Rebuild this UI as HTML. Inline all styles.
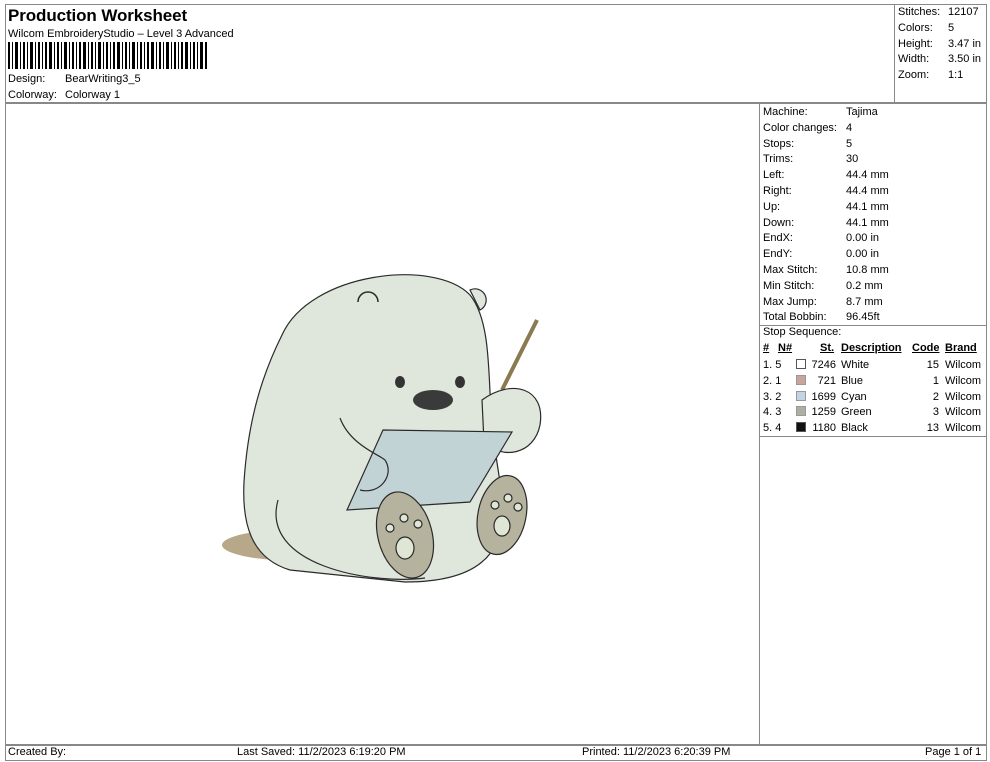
<!DOCTYPE html>
<html><head><meta charset="utf-8"><style>
*{margin:0;padding:0;box-sizing:border-box}
body{width:990px;height:762px;background:#fff;font-family:"Liberation Sans",Arial,sans-serif;font-size:11px;color:#000;position:relative;overflow:hidden}
.a{position:absolute;white-space:nowrap}
.b{position:absolute;border:1px solid #888}
</style></head><body>
<div class="b" style="left:5px;top:4px;width:982px;height:757px"></div>
<div class="b" style="left:5px;top:4px;width:982px;height:100px;border-width:1px 1px 2px 1px"></div>
<div class="b" style="left:894px;top:4px;width:93px;height:100px"></div>
<div class="b" style="left:759px;top:103px;width:228px;height:642px"></div>
<div class="b" style="left:759px;top:325px;width:228px;height:112px"></div>
<div class="b" style="left:5px;top:744px;width:982px;height:17px;border-width:2px 1px 1px 1px"></div>

<div class="a" style="left:8px;top:6px;font-size:17px;font-weight:bold;letter-spacing:-0.1px">Production Worksheet</div>
<div class="a" style="left:8px;top:28px">Wilcom EmbroideryStudio – Level 3 Advanced</div>
<svg class="a" style="left:8px;top:42px" width="200" height="27">
<g fill="#000">
<rect x="0" width="2" height="27"/><rect x="4" width="1" height="27"/><rect x="7" width="3" height="27"/><rect x="12" width="1" height="27"/><rect x="15" width="2" height="27"/><rect x="19" width="1" height="27"/><rect x="22" width="3" height="27"/><rect x="27" width="1" height="27"/><rect x="30" width="2" height="27"/><rect x="34" width="1" height="27"/><rect x="37" width="2" height="27"/><rect x="41" width="3" height="27"/><rect x="46" width="1" height="27"/><rect x="49" width="2" height="27"/><rect x="53" width="1" height="27"/><rect x="56" width="3" height="27"/><rect x="61" width="1" height="27"/><rect x="64" width="2" height="27"/><rect x="68" width="1" height="27"/><rect x="71" width="2" height="27"/><rect x="75" width="3" height="27"/><rect x="80" width="1" height="27"/><rect x="83" width="2" height="27"/><rect x="87" width="1" height="27"/><rect x="90" width="3" height="27"/><rect x="95" width="1" height="27"/><rect x="98" width="2" height="27"/><rect x="102" width="1" height="27"/><rect x="105" width="2" height="27"/><rect x="109" width="3" height="27"/><rect x="114" width="1" height="27"/><rect x="117" width="2" height="27"/><rect x="121" width="1" height="27"/><rect x="124" width="3" height="27"/><rect x="129" width="1" height="27"/><rect x="132" width="2" height="27"/><rect x="136" width="1" height="27"/><rect x="139" width="2" height="27"/><rect x="143" width="3" height="27"/><rect x="148" width="1" height="27"/><rect x="151" width="2" height="27"/><rect x="155" width="1" height="27"/><rect x="158" width="3" height="27"/><rect x="163" width="1" height="27"/><rect x="166" width="2" height="27"/><rect x="170" width="1" height="27"/><rect x="173" width="2" height="27"/><rect x="177" width="3" height="27"/><rect x="182" width="1" height="27"/><rect x="185" width="2" height="27"/><rect x="189" width="1" height="27"/><rect x="192" width="3" height="27"/><rect x="197" width="2" height="27"/>
</g></svg>
<div class="a" style="left:8px;top:73px">Design:</div><div class="a" style="left:65px;top:73px">BearWriting3_5</div>
<div class="a" style="left:8px;top:89px">Colorway:</div><div class="a" style="left:65px;top:89px">Colorway 1</div>

<div class="a" style="left:898px;top:5px;line-height:15.8px">Stitches:<br>Colors:<br>Height:<br>Width:<br>Zoom:</div>
<div class="a" style="left:948px;top:5px;line-height:15.8px">12107<br>5<br>3.47 in<br>3.50 in<br>1:1</div>

<div class="a" style="left:763px;top:105px;line-height:15.8px">Machine:<br>Color changes:<br>Stops:<br>Trims:<br>Left:<br>Right:<br>Up:<br>Down:<br>EndX:<br>EndY:<br>Max Stitch:<br>Min Stitch:<br>Max Jump:<br>Total Bobbin:</div>
<div class="a" style="left:846px;top:105px;line-height:15.8px">Tajima<br>4<br>5<br>30<br>44.4 mm<br>44.4 mm<br>44.1 mm<br>44.1 mm<br>0.00 in<br>0.00 in<br>10.8 mm<br>0.2 mm<br>8.7 mm<br>96.45ft</div>

<div class="a" style="left:763px;top:326px">Stop Sequence:</div>
<div class="a" style="left:763px;top:342px;font-weight:bold;text-decoration:underline">#</div>
<div class="a" style="left:778px;top:342px;font-weight:bold;text-decoration:underline">N#</div>
<div class="a" style="left:820px;top:342px;font-weight:bold;text-decoration:underline">St.</div>
<div class="a" style="left:841px;top:342px;font-weight:bold;text-decoration:underline">Description</div>
<div class="a" style="left:912px;top:342px;font-weight:bold;text-decoration:underline">Code</div>
<div class="a" style="left:945px;top:342px;font-weight:bold;text-decoration:underline">Brand</div>
<div class="a" style="left:763px;top:358px;line-height:15.8px">1. 5<br>2. 1<br>3. 2<br>4. 3<br>5. 4</div>
<div class="a" style="left:796px;top:359px;width:10px;height:10px;border:1px solid #555;background:#fff"></div>
<div class="a" style="left:796px;top:375px;width:10px;height:10px;border:1px solid #999;background:#c9a49c"></div>
<div class="a" style="left:796px;top:391px;width:10px;height:10px;border:1px solid #999;background:#c4d4e4"></div>
<div class="a" style="left:796px;top:406px;width:10px;height:10px;border:1px solid #999;background:#b0ada2"></div>
<div class="a" style="left:796px;top:422px;width:10px;height:10px;border:1px solid #555;background:#111"></div>
<div class="a" style="left:806px;top:358px;width:30px;text-align:right;line-height:15.8px">7246<br>721<br>1699<br>1259<br>1180</div>
<div class="a" style="left:841px;top:358px;line-height:15.8px">White<br>Blue<br>Cyan<br>Green<br>Black</div>
<div class="a" style="left:910px;top:358px;width:29px;text-align:right;line-height:15.8px">15<br>1<br>2<br>3<br>13</div>
<div class="a" style="left:945px;top:358px;line-height:15.8px">Wilcom<br>Wilcom<br>Wilcom<br>Wilcom<br>Wilcom</div>

<div class="a" style="left:8px;top:746px">Created By:</div>
<div class="a" style="left:237px;top:746px">Last Saved: 11/2/2023 6:19:20 PM</div>
<div class="a" style="left:582px;top:746px">Printed: 11/2/2023 6:20:39 PM</div>
<div class="a" style="left:925px;top:746px">Page 1 of 1</div>

<svg class="a" style="left:220px;top:260px" width="330" height="330" viewBox="0 0 330 330">
<g stroke="#2a2a2a" stroke-width="1.2">
<ellipse cx="80" cy="285" rx="78" ry="16" fill="#b8a88a" stroke="none"/>
<path d="M250 30 a11 11 0 0 1 10 20 Z" fill="#dfe6dc"/>
<circle cx="42" cy="245" r="15" fill="#dfe6dc"/>
<path d="M62 75 C90 12 215 -2 250 35 C272 62 268 120 272 170 L282 235 C290 300 250 322 185 322 L70 310 C30 298 22 262 24 222 C28 160 42 115 62 75 Z" fill="#dfe6dc"/>
<path d="M138 42 a10 10 0 0 1 20 0" fill="none" stroke-width="1.5"/>
<path d="M317 60 L282 130" stroke="#8a7a50" stroke-width="4"/>
<path d="M262 140 C292 118 326 128 320 165 C314 195 282 200 264 182 Z" fill="#dfe6dc"/>
<path d="M163 170 L292 172 L250 242 L127 250 Z" fill="#c2d3d6"/>
<path d="M120 158 C130 185 160 195 165 200 C175 215 160 235 140 230" fill="none"/>
<path d="M58 240 C40 305 150 325 205 318" fill="none"/>
<ellipse cx="185" cy="275" rx="27" ry="44" transform="rotate(-15 185 275)" fill="#b5b39e"/>
<ellipse cx="282" cy="255" rx="24" ry="40" transform="rotate(12 282 255)" fill="#b5b39e"/>
<ellipse cx="185" cy="288" rx="9" ry="11" fill="#dfe6d5"/>
<ellipse cx="282" cy="266" rx="8" ry="10" fill="#dfe6d5"/>
<circle cx="170" cy="268" r="4" fill="#dfe6d5"/><circle cx="184" cy="258" r="4" fill="#dfe6d5"/><circle cx="198" cy="264" r="4" fill="#dfe6d5"/>
<circle cx="275" cy="245" r="4" fill="#dfe6d5"/><circle cx="288" cy="238" r="4" fill="#dfe6d5"/><circle cx="298" cy="247" r="4" fill="#dfe6d5"/>
</g>
<ellipse cx="180" cy="122" rx="5" ry="6" fill="#333"/>
<ellipse cx="240" cy="122" rx="5" ry="6" fill="#333"/>
<ellipse cx="213" cy="140" rx="20" ry="10" fill="#3a3a3a"/>
</svg>
</body></html>
